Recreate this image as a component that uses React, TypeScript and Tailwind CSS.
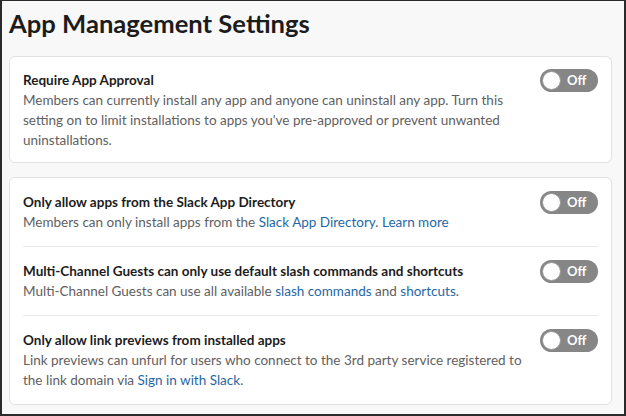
import React from 'react';

function Toggle() {
  return (
    <div className="relative flex h-[23px] w-[58px] shrink-0 items-center rounded-full bg-[#868686]">
      <span className="absolute left-[2px] top-[2px] h-[19px] w-[19px] rounded-full border border-[#9a9a9a] bg-white" />
      <span className="ml-[27px] text-[13px] font-bold text-white">Off</span>
    </div>
  );
}

const link = 'text-[#1f68a6]';

type Row = { title: string; desc: React.ReactNode };

const rows: Row[] = [
  {
    title: 'Only allow apps from the Slack App Directory',
    desc: (
      <>
        Members can only install apps from the <span className={link}>Slack App Directory</span>.{' '}
        <span className={link}>Learn more</span>
      </>
    ),
  },
  {
    title: 'Multi-Channel Guests can only use default slash commands and shortcuts',
    desc: (
      <>
        Multi-Channel Guests can use all available <span className={link}>slash commands</span> and{' '}
        <span className={link}>shortcuts</span>.
      </>
    ),
  },
  {
    title: 'Only allow link previews from installed apps',
    desc: (
      <>
        Link previews can unfurl for users who connect to the 3rd party service registered to the link domain via{' '}
        <span className={link}>Sign in with Slack</span>.
      </>
    ),
  },
];

function Setting({ title, desc }: Row) {
  return (
    <div className="flex items-start justify-between">
      <div className="w-[508px]">
        <div className="text-[13.5px] font-bold leading-[20px] text-[#1d1c1d]">{title}</div>
        <div className="text-[13.5px] leading-[20px] text-[#616061]">{desc}</div>
      </div>
      <div className="-mt-px">
        <Toggle />
      </div>
    </div>
  );
}

export default function App() {
  return (
    <div
      className="h-[416px] w-[626px] overflow-hidden border-b-2 border-l-2 border-r-2 border-t border-[#2a2a2a] bg-[#f8f8f8] pl-[7px] pr-[12px] pt-[4px]"
      style={{ fontFamily: 'Lato, "Noto Sans", sans-serif' }}
    >
      <h1 className="text-[25.6px] font-bold leading-[36px] text-[#1d1c1d]">App Management Settings</h1>

      <div className="mt-[15px] rounded-md border border-[#e2e2e2] bg-white px-[13px] pb-[12px] pt-[13px]">
        <Setting
          title="Require App Approval"
          desc="Members can currently install any app and anyone can uninstall any app. Turn this setting on to limit installations to apps you've pre-approved or prevent unwanted uninstallations."
        />
      </div>

      <div className="mt-[14px] rounded-md border border-[#e2e2e2] bg-white px-[13px]">
        {rows.map((r, i) => (
          <div key={r.title} className={`py-[14px] ${i > 0 ? 'border-t border-[#e8e8e8]' : ''}`}>
            <Setting {...r} />
          </div>
        ))}
      </div>
    </div>
  );
}
